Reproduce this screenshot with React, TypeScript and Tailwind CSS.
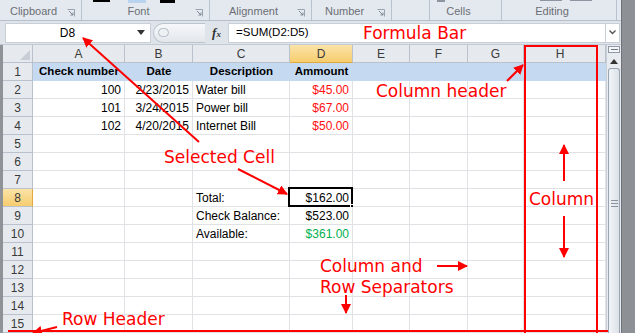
import React from 'react';

const COLS = [
  { key: 'A', w: 92 },
  { key: 'B', w: 68 },
  { key: 'C', w: 97 },
  { key: 'D', w: 63 },
  { key: 'E', w: 57 },
  { key: 'F', w: 58 },
  { key: 'G', w: 56 },
  { key: 'H', w: 73 },
  { key: '', w: 9 },
];

type Cell = { text: string; align?: 'left' | 'right' | 'center'; color?: string; bold?: boolean };

const DATA: Record<number, Record<string, Cell>> = {
  1: {
    A: { text: 'Check number', align: 'center', bold: true },
    B: { text: 'Date', align: 'center', bold: true },
    C: { text: 'Description', align: 'center', bold: true },
    D: { text: 'Ammount', align: 'center', bold: true },
  },
  2: {
    A: { text: '100', align: 'right' },
    B: { text: '2/23/2015', align: 'right' },
    C: { text: 'Water bill' },
    D: { text: '$45.00', align: 'right', color: 'red' },
  },
  3: {
    A: { text: '101', align: 'right' },
    B: { text: '3/24/2015', align: 'right' },
    C: { text: 'Power bill' },
    D: { text: '$67.00', align: 'right', color: 'red' },
  },
  4: {
    A: { text: '102', align: 'right' },
    B: { text: '4/20/2015', align: 'right' },
    C: { text: 'Internet Bill' },
    D: { text: '$50.00', align: 'right', color: 'red' },
  },
  8: { C: { text: 'Total:' }, D: { text: '$162.00', align: 'right' } },
  9: { C: { text: 'Check Balance:' }, D: { text: '$523.00', align: 'right' } },
  10: { C: { text: 'Available:' }, D: { text: '$361.00', align: 'right', color: 'green' } },
};

const ROWS = Array.from({ length: 15 }, (_, i) => i + 1);

function Launcher() {
  return (
    <svg width="8" height="8" viewBox="0 0 8 8" className="shrink-0">
      <path d="M0.5 0.5h7v7" fill="none" stroke="#9aa3ae" />
      <path d="M2 2l4 4M6 3.5V6H3.5" fill="none" stroke="#7d8691" />
    </svg>
  );
}

function Group({ label, w, launcher = true }: { label: string; w: number; launcher?: boolean }) {
  return (
    <div
      className="flex items-end h-full border-r border-[#b9c3cf] pb-[3px] pr-[6px]"
      style={{ width: w }}
    >
      <span className="flex-1 text-center text-[11px] leading-[12px] text-[#6b6f75]">{label}</span>
      {launcher ? <Launcher /> : <span className="w-[8px]" />}
    </div>
  );
}

function Ribbon() {
  return (
    <div className="relative flex h-[21px] bg-[#e4e9ef] border-b border-[#b6bfca]">
      <Group label="Clipboard" w={82} />
      <Group label="Font" w={128} />
      <Group label="Alignment" w={102} />
      <Group label="Number" w={80} />
      <Group label="" w={38} launcher={false} />
      <Group label="Cells" w={72} launcher={false} />
      <Group label="Editing" w={115} launcher={false} />
      {/* tops of ribbon buttons cut off by the crop */}
      <div className="absolute left-[93px] top-0 w-[17px] h-[2px] bg-black" />
      <div className="absolute left-[128px] top-0 w-[18px] h-[3px] bg-[#b9d3f0]" />
      <div className="absolute left-[160px] top-0 w-[15px] h-[3px] bg-black" />
      <div className="absolute left-[437px] top-0 w-[8px] h-[2px] bg-[#8d96a0]" />
      <div className="absolute left-[540px] top-0 w-[22px] h-[1px] bg-[#8d96a0]" />
      <div className="absolute left-[570px] top-0 w-[22px] h-[1px] bg-[#8d96a0]" />
    </div>
  );
}

function FormulaRow() {
  return (
    <div className="flex items-center h-[24px] bg-[#dfe4ea] pl-[5px] border-b border-[#c3cad3]">
      <div className="relative flex items-center h-[20px] w-[146px] bg-white border border-[#c9cfd6]">
        <span className="flex-1 text-center text-[12px] text-black pr-[8px]">D8</span>
        <svg width="8" height="5" viewBox="0 0 8 5" className="mr-[5px]">
          <path d="M0 0h8L4 5z" fill="#333" />
        </svg>
      </div>
      <div className="flex items-center ml-[2px] h-[20px] w-[52px] rounded-l-full border border-r-0 border-[#bcc4cd] bg-gradient-to-b from-[#f6f8fa] to-[#e3e7ec] pl-[4px]">
        <div className="w-[11px] h-[9px] rounded-full border border-[#b3bcc6] bg-[#eef1f4]" />
      </div>
      <div className="w-[23px] text-center font-['Liberation_Serif',serif] italic font-bold text-[13px] leading-none text-[#333]">
        f<span className="text-[9px]">x</span>
      </div>
      <div className="flex items-center h-[20px] w-[378px] bg-white border border-[#c9cfd6] pl-[7px]">
        <span className="text-[11.5px] text-black">=SUM(D2:D5)</span>
      </div>
      <div className="flex items-center justify-center h-[20px] w-[14px] bg-white border border-l-0 border-[#c9cfd6]">
        <svg width="7" height="5" viewBox="0 0 7 5">
          <path d="M0.5 0.5L3.5 3.5L6.5 0.5" fill="none" stroke="#555" strokeWidth="1.4" />
        </svg>
      </div>
    </div>
  );
}

function Sheet() {
  return (
    <div className="grid grid-cols-[30px_92px_68px_97px_63px_57px_58px_56px_73px_9px] grid-rows-[repeat(16,18px)] text-[12px] leading-none">
      <div className="bg-[#e6eaef] border-r border-b border-[#b9c2cc] flex items-end justify-end">
        <svg width="10" height="10" viewBox="0 0 10 10" className="mr-[2px] mb-[2px]">
          <path d="M10 0V10H0z" fill="#c8ced6" />
        </svg>
      </div>
      {COLS.map((c) => (
        <div
          key={'h' + c.key + c.w}
          className={
            'flex items-center justify-center border-r border-b border-[#b9c2cc] text-[#3a3a3a] ' +
            (c.key === 'D' ? 'bg-gradient-to-b from-[#fbe3a7] to-[#f6cd6e] border-b-[#e2a93c]' : 'bg-[#e6eaef]')
          }
        >
          {c.key}
        </div>
      ))}
      {ROWS.map((r) => (
        <React.Fragment key={r}>
          <div
            className={
              'flex items-center justify-center border-r border-b border-[#b9c2cc] text-[#3a3a3a] ' +
              (r === 8 ? 'bg-gradient-to-b from-[#fbe3a7] to-[#f6cd6e] border-r-[#e2a93c]' : 'bg-[#e6eaef]')
            }
          >
            {r}
          </div>
          {COLS.map((c) => {
            const cell = DATA[r]?.[c.key];
            const selected = r === 8 && c.key === 'D';
            return (
              <div
                key={c.key + c.w}
                className={
                  'relative flex items-center whitespace-nowrap px-[3px] ' +
                  (r === 1 ? 'bg-[#c5d9f1] ' : 'bg-white border-r border-b border-[#e0e2e5] ') +
                  (cell?.align === 'right' ? 'justify-end ' : cell?.align === 'center' ? 'justify-center ' : 'justify-start ') +
                  (cell?.bold ? 'font-bold text-[11.5px] ' : '') +
                  (cell?.color === 'red' ? 'text-[#ff1010]' : cell?.color === 'green' ? 'text-[#00b050]' : 'text-black')
                }
              >
                {cell?.text}
                {selected && (
                  <>
                    <div className="absolute -left-[2px] -top-[2px] -right-[1px] -bottom-[1px] border-[2px] border-black" />
                    <div className="absolute -right-[3px] -bottom-[3px] w-[5px] h-[5px] bg-black border border-white" />
                  </>
                )}
              </div>
            );
          })}
        </React.Fragment>
      ))}
    </div>
  );
}

function Scrollbar() {
  return (
    <div className="flex flex-col w-[15px] bg-[#e8ebef] border-l border-[#c9cfd6] pt-[1px]">
      <div className="mx-[1px] h-[7px] border border-[#8f99a5] bg-[#f4f6f8] flex items-center justify-center">
        <div className="w-[7px] h-[1px] bg-[#6c7580]" />
      </div>
      <div className="mx-[1px] mt-[1px] h-[14px] flex items-center justify-center">
        <svg width="8" height="5" viewBox="0 0 8 5">
          <path d="M0 5L4 0L8 5z" fill="#333" />
        </svg>
      </div>
      <div className="mx-[1px] flex-1 rounded-t-[3px] border border-b-0 border-[#9aa5b3] bg-gradient-to-r from-[#f1f4f7] to-[#dde2e8] flex flex-col items-center pt-[131px] gap-[2px]">
        <div className="w-[7px] h-[1px] bg-[#8a939e]" />
        <div className="w-[7px] h-[1px] bg-[#8a939e]" />
        <div className="w-[7px] h-[1px] bg-[#8a939e]" />
      </div>
    </div>
  );
}

const NOTES = [
  { text: 'Formula Bar', left: 363, top: 23 },
  { text: 'Column header', left: 376, top: 81 },
  { text: 'Selected Cell', left: 164, top: 147 },
  { text: 'Column', left: 529, top: 189 },
  { text: 'Column and', left: 320, top: 256 },
  { text: 'Row Separators', left: 320, top: 277 },
  { text: 'Row Header', left: 62, top: 309 },
];

const ARROWS = [
  [199, 142, 83, 38],
  [238, 169, 287, 194],
  [507, 81, 523, 65],
  [564, 181, 564, 145],
  [564, 216, 564, 257],
  [437, 266, 467, 266],
  [346, 295, 346, 313],
  [57, 327, 33, 333],
];

export default function App() {
  return (
    <div className="relative flex w-[635px] h-[333px] overflow-hidden bg-white font-['Liberation_Sans',Arial,sans-serif]">
      <div className="flex flex-col w-[621px]">
        <Ribbon />
        <FormulaRow />
        <div className="flex flex-1 min-h-0">
          <div className="w-[3px] bg-[#8f9398]" />
          <Sheet />
          <Scrollbar />
        </div>
      </div>
      <div className="w-[14px] bg-[#8d9196] border-l border-[#6f7378]" />

      {/* red annotations */}
      <div className="absolute left-[524px] top-[45px] w-[74px] h-[300px] border-2 border-[#ff0000] pointer-events-none" />
      <div className="absolute left-[8px] top-[330px] w-[600px] h-[2px] bg-[#ff0000]" />
      {NOTES.map((n) => (
        <div
          key={n.text}
          className="absolute whitespace-nowrap font-['DejaVu_Sans',Verdana,sans-serif] text-[17px] leading-[20px] text-[#ff0000]"
          style={{ left: n.left, top: n.top }}
        >
          {n.text}
        </div>
      ))}
      <svg className="absolute left-0 top-0 pointer-events-none" width="635" height="333" viewBox="0 0 635 333">
        <defs>
          <marker id="head" viewBox="0 0 10 10" refX="9" refY="5" markerWidth="5" markerHeight="5" orient="auto">
            <path d="M0 0L10 5L0 10z" fill="#ff0000" />
          </marker>
        </defs>
        {ARROWS.map(([x1, y1, x2, y2], i) => (
          <line key={i} x1={x1} y1={y1} x2={x2} y2={y2} stroke="#ff0000" strokeWidth="2" markerEnd="url(#head)" />
        ))}
      </svg>
    </div>
  );
}
